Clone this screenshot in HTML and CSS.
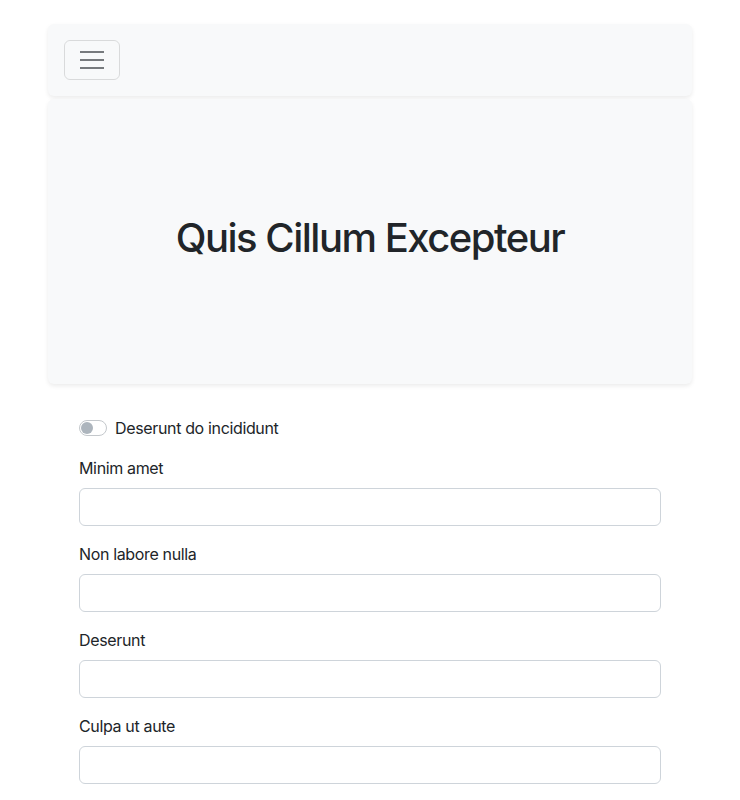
FILE: index.html
```html
<!DOCTYPE html>
<html>
<head>
<meta charset="utf-8">
<link rel="stylesheet" href="styles.css">
</head>
<body>
<div class="container">
  <nav class="navbar">
    <button class="toggler" type="button" aria-label="Toggle navigation">
      <svg width="30" height="30" viewBox="0 0 30 30"><path stroke="rgba(33,37,41,0.6)" stroke-linecap="butt" stroke-width="2" d="M3 7h24M3 15h24M3 23h24"/></svg>
    </button>
  </nav>
  <header class="hero">
    <h1>Quis Cillum Excepteur</h1>
  </header>
  <form class="form">
    <div class="check">
      <span class="switch"><span class="knob"></span></span>
      <label class="check-label">Deserunt do incididunt</label>
    </div>
    <div class="group">
      <label class="label">Minim amet</label>
      <input class="input" type="text">
    </div>
    <div class="group">
      <label class="label">Non labore nulla</label>
      <input class="input" type="text">
    </div>
    <div class="group">
      <label class="label">Deserunt</label>
      <input class="input" type="text">
    </div>
    <div class="group">
      <label class="label">Culpa ut aute</label>
      <input class="input" type="text">
    </div>
  </form>
</div>
</body>
</html>
```

FILE: styles.css
```css
* { box-sizing: border-box; }
html, body { margin: 0; padding: 0; }
body {
  font-family: Inter, "Liberation Sans", sans-serif;
  font-size: 16px;
  line-height: 1.5;
  color: #212529;
  background: #fff;
  letter-spacing: -0.35px;
}
.container {
  width: 644px;
  margin: 24px auto 0;
}
.navbar {
  height: 72px;
  background: #f8f9fa;
  border-radius: 6px;
  box-shadow: 0 2px 4px rgba(0,0,0,0.08);
  padding: 16px;
  display: flex;
  align-items: center;
}
.toggler {
  width: 56px;
  height: 40px;
  padding: 0;
  border: 1px solid rgba(0,0,0,0.12);
  border-radius: 6px;
  background: transparent;
  display: flex;
  align-items: center;
  justify-content: center;
}
.toggler svg { display: block; }
.hero {
  margin-top: 3px;
  height: 285px;
  padding-bottom: 8px;
  background: #f8f9fa;
  border-radius: 6px;
  box-shadow: 0 2px 4px rgba(0,0,0,0.08);
  display: flex;
  align-items: center;
  justify-content: center;
}
.hero h1 {
  margin: 0;
  font-size: 40px;
  font-weight: 500;
  line-height: 1.2;
  letter-spacing: -1.5px;
}
.form {
  margin-top: 32px;
  padding: 0 31px;
}
.check {
  display: flex;
  align-items: center;
  height: 24px;
  margin-bottom: 16px;
}
.switch {
  width: 28px;
  height: 16px;
  border: 1px solid #c4c8cc;
  border-radius: 8px;
  background: #fff;
  position: relative;
  margin-right: 8px;
}
.knob {
  position: absolute;
  left: 1px;
  top: 1px;
  width: 12px;
  height: 12px;
  border-radius: 50%;
  background: #adb5bd;
}
.check-label { font-size: 16px; }
.group { margin-bottom: 16px; }
.label {
  display: block;
  margin-bottom: 8px;
}
.input {
  display: block;
  width: 100%;
  height: 38px;
  border: 1px solid #ced4da;
  border-radius: 6px;
  background: #fff;
  padding: 6px 12px;
  font: inherit;
}
```
